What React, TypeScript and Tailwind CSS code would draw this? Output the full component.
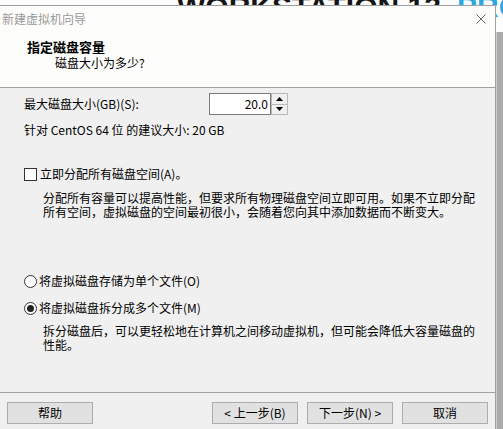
export default function App() {
  const btn =
    "w-[86px] h-[22px] bg-[#e1e1e1] border border-[#adadad] flex items-center justify-center leading-[16px]";
  return (
    <div className="relative w-[503px] h-[429px] overflow-hidden bg-[#fdfdfd] font-['Noto_Sans_CJK_SC','Microsoft_YaHei',sans-serif] text-[12px] text-black">
      <div className="absolute left-[177px] top-[-8px] font-['Liberation_Sans',sans-serif] font-bold text-[30px] leading-[30px] text-[#151515] whitespace-nowrap">
        WORKSTATION 12
      </div>
      <div className="absolute left-[457px] top-[-8px] font-['Liberation_Sans',sans-serif] font-bold text-[30px] leading-[30px] text-[#2aa8e0] whitespace-nowrap">
        PRO
      </div>
      <div className="relative flex flex-col h-full">
        <div className="h-[5px] shrink-0" />
        <div className="flex flex-1 min-h-0">
          <div className="w-[496px] shrink-0 flex flex-col border-t border-r border-[#a0a0a0] bg-[#f0f0f0]">
            <div className="h-[25px] bg-[#fdfdfb] flex items-center justify-between pl-[2px] pr-[9px]">
              <span className="text-[#999999] leading-[16px]">新建虚拟机向导</span>
              <svg width="10" height="10" viewBox="0 0 10 10">
                <path d="M0.5 0.5 L9.5 9.5 M9.5 0.5 L0.5 9.5" stroke="#666" strokeWidth="1" fill="none" />
              </svg>
            </div>
            <div className="bg-[#fdfdfb] pt-[8px] pb-[16px] border-b border-[#a0a0a0]">
              <div className="pl-[27px] text-[13px] font-bold leading-[16px]">指定磁盘容量</div>
              <div className="pl-[55px] leading-[16px]">磁盘大小为多少?</div>
            </div>
            <div className="flex-1 flex flex-col pl-[24px]">
              <div className="mt-[5px] h-[22px] flex items-center">
                <span className="w-[185px] leading-[16px]">最大磁盘大小(GB)(S):</span>
                <div className="w-[62px] h-[22px] border border-[#7a7a7a] bg-white flex items-center justify-end pr-[2px] leading-[16px]">
                  20.0
                </div>
                <div className="w-[17px] h-[22px] border border-[#b9b9b9] bg-[#f0f0f0] flex flex-col">
                  <div className="flex-1 flex items-center justify-center border-b border-[#b9b9b9]">
                    <svg width="7" height="4" viewBox="0 0 7 4">
                      <path d="M0 4 L3.5 0 L7 4 Z" fill="#000" />
                    </svg>
                  </div>
                  <div className="flex-1 flex items-center justify-center">
                    <svg width="7" height="4" viewBox="0 0 7 4">
                      <path d="M0 0 L7 0 L3.5 4 Z" fill="#000" />
                    </svg>
                  </div>
                </div>
              </div>
              <div className="mt-[7px] leading-[16px]">针对 CentOS 64 位 的建议大小: 20 GB</div>
              <div className="mt-[28px] h-[16px] flex items-center">
                <div className="w-[13px] h-[13px] border border-[#333333] bg-white" />
                <span className="ml-[3px] leading-[16px]">立即分配所有磁盘空间(A)。</span>
              </div>
              <div className="mt-[9px] pl-[19px] leading-[14px]">
                分配所有容量可以提高性能，但要求所有物理磁盘空间立即可用。如果不立即分配
                <br />
                所有空间，虚拟磁盘的空间最初很小，会随着您向其中添加数据而不断变大。
              </div>
              <div className="mt-[54px] h-[16px] flex items-center">
                <div className="w-[13px] h-[13px] rounded-full border border-[#333333] bg-white" />
                <span className="ml-[2px] leading-[16px]">将虚拟磁盘存储为单个文件(O)</span>
              </div>
              <div className="mt-[11px] h-[16px] flex items-center">
                <div className="w-[13px] h-[13px] rounded-full border border-[#333333] bg-white flex items-center justify-center">
                  <div className="w-[7px] h-[7px] rounded-full bg-[#222222]" />
                </div>
                <span className="ml-[2px] leading-[16px]">将虚拟磁盘拆分成多个文件(M)</span>
              </div>
              <div className="mt-[8px] pl-[19px] leading-[14px]">
                拆分磁盘后，可以更轻松地在计算机之间移动虚拟机，但可能会降低大容量磁盘的
                <br />
                性能。
              </div>
            </div>
            <div className="h-[37px] shrink-0 border-t border-[#a0a0a0] pt-[9px] pl-[7px] pr-[7px] flex items-start">
              <div className={btn}>帮助</div>
              <div className="flex-1" />
              <div className="flex gap-[9px]">
                <div className={btn}>&lt; 上一步(B)</div>
                <div className={btn}>下一步(N) &gt;</div>
                <div className={btn}>取消</div>
              </div>
            </div>
          </div>
          <div className="flex-1 flex flex-col">
            <div className="h-[27px] shrink-0" />
            <div className="flex-1 bg-[#ababab] border-l border-[#cdcdcd]" />
          </div>
        </div>
      </div>
    </div>
  );
}
